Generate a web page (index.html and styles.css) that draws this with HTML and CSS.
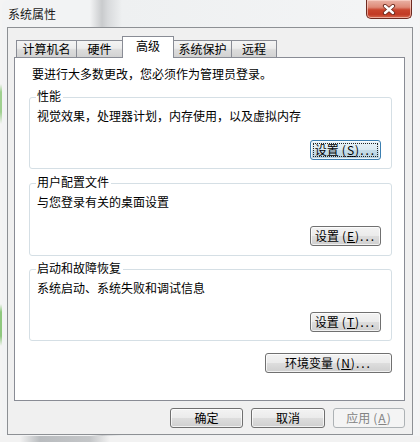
FILE: index.html
```html
<!DOCTYPE html>
<html lang="zh-CN">
<head>
<meta charset="utf-8">
<title>系统属性</title>
<link rel="stylesheet" href="styles.css">
</head>
<body>
<div class="screen">
  <div class="window">
    <div class="titlebar">
      <span class="title">系统属性</span>
      <div class="close">
        <svg width="14" height="11" viewBox="0 0 14 11">
          <path d="M3 2 L11 9 M11 2 L3 9" stroke="#6b2a1e" stroke-width="4.2" stroke-linecap="round" fill="none"/>
          <path d="M3 2 L11 9 M11 2 L3 9" stroke="#ffffff" stroke-width="2.4" stroke-linecap="round" fill="none"/>
        </svg>
      </div>
    </div>
    <div class="dialog">
      <div class="tabs">
        <div class="tab t1">计算机名</div>
        <div class="tab t2">硬件</div>
        <div class="tab active">高级</div>
        <div class="tab t4">系统保护</div>
        <div class="tab t5 last">远程</div>
      </div>
      <div class="panel">
        <div class="intro">要进行大多数更改，您必须作为管理员登录。</div>
        <div class="group g1">
          <span class="legend">性能</span>
          <div class="desc">视觉效果，处理器计划，内存使用，以及虚拟内存</div>
          <div class="row"><button class="btn set focus"><span class="focusring">设置<span class="mn">(<u>S</u>)</span><span class="dots">...</span></span></button></div>
        </div>
        <div class="group g2">
          <span class="legend">用户配置文件</span>
          <div class="desc">与您登录有关的桌面设置</div>
          <div class="row"><button class="btn set">设置<span class="mn">(<u>E</u>)</span><span class="dots">...</span></button></div>
        </div>
        <div class="group g3">
          <span class="legend">启动和故障恢复</span>
          <div class="desc">系统启动、系统失败和调试信息</div>
          <div class="row"><button class="btn set">设置<span class="mn">(<u>T</u>)</span><span class="dots">...</span></button></div>
        </div>
        <div class="envrow"><button class="btn env">环境变量<span class="mn">(<u>N</u>)</span><span class="dots">...</span></button></div>
      </div>
      <div class="footer">
        <button class="btn ok">确定</button>
        <button class="btn cancel">取消</button>
        <button class="btn apply" disabled>应用<span class="mn">(<u>A</u>)</span></button>
      </div>
    </div>
  </div>
</div>
</body>
</html>
```

FILE: styles.css
```css
* { box-sizing: border-box; }

body {
  margin: 0;
  font-family: "Noto Sans CJK SC", "Noto Sans", sans-serif;
  font-size: 12px;
  color: #000;
}

.screen {
  width: 420px;
  height: 442px;
  padding-left: 2px;
  background:
    linear-gradient(to bottom, transparent 84px, #9fd08f 92px, #9fd08f 112px, transparent 124px, transparent 304px, #8fc87e 312px, #8fc87e 336px, transparent 346px) 0 0 / 2px 100% no-repeat,
    linear-gradient(to right, #f2f2f2 0, #f2f2f2 20px, #b9bcbf 40px, #c4c6c8 90px, #f2f2f2 110px) 0 436px / 420px 6px no-repeat,
    #f4f4f4;
  overflow: hidden;
}

.window {
  width: 417px;
  height: 436px;
  padding: 0 6px 1px 5px;
  border-radius: 6px 6px 0 0;
  background:
    linear-gradient(to right, #f2f3f4 0, #f2f3f4 88px, #c9cbcd 100px, #d8dadc 106px, #eef0f1 120px, #f4f5f6 100%);
}

.titlebar {
  height: 27px;
  display: flex;
  justify-content: space-between;
  align-items: flex-start;
}

.title {
  padding-top: 6px;
  padding-left: 1px;
  line-height: 16px;
  font-size: 12px;
  color: #1a1a1a;
}

.close {
  width: 46px;
  height: 19px;
  margin-right: 1px;
  border: 1px solid #6e2a20;
  border-top: none;
  border-radius: 0 0 5px 5px;
  background: linear-gradient(to bottom, #eab3a6 0%, #de8a77 40%, #c9452d 55%, #c23a24 80%, #d66a4f 100%);
  display: flex;
  align-items: center;
  justify-content: center;
  box-shadow: inset 0 0 0 1px rgba(255, 220, 210, 0.6);
}

.dialog {
  height: 408px;
  border: 1px solid #8d9094;
  background: #f0f0f0;
  padding: 8px 7px 6px 6px;
  display: flex;
  flex-direction: column;
}

.tabs {
  height: 21px;
  display: flex;
  align-items: flex-end;
  padding-left: 2px;
}

.tab {
  height: 17px;
  line-height: 16px;
  border: 1px solid #898c95;
  border-right: none;
  border-bottom: none;
  background: linear-gradient(to bottom, #f4f4f4 0%, #ececec 45%, #dcdcdc 55%, #d2d2d2 100%);
  text-align: center;
}

.t1 { width: 60px; }
.t2 { width: 46px; }
.t4 { width: 57px; }
.t5 { width: 46px; }
.tab.last { border-right: 1px solid #898c95; }

.tab.active {
  position: relative;
  z-index: 1;
  width: 52px;
  height: 22px;
  margin-bottom: -1px;
  border-right: 1px solid #898c95;
  background: #ffffff;
  line-height: 18px;
}

.tab.active + .tab { border-left: none; }

.panel {
  height: 344px;
  background: #ffffff;
  border: 1px solid #898c95;
  padding: 8px 12px 0 14px;
  display: flex;
  flex-direction: column;
}

.intro {
  line-height: 16px;
  margin-left: 3px;
}

.group {
  position: relative;
  height: 72px;
  border: 1px solid #d5dfe5;
  border-radius: 3px;
  padding: 10px 10px 8px 7px;
}

.g1 { margin-top: 15px; }
.g2 { margin-top: 14px; height: 73px; }
.g3 { margin-top: 13px; }

.legend {
  position: absolute;
  left: 6px;
  top: -10px;
  line-height: 16px;
  padding: 0 2px 0 1px;
  background: #ffffff;
}

.desc {
  line-height: 16px;
}

.row {
  display: flex;
  justify-content: flex-end;
  margin-top: 16px;
}

.btn {
  font-family: "Noto Sans CJK SC", "Noto Sans", sans-serif;
  font-size: 12px;
  color: #000;
  height: 20px;
  padding: 0;
  border: 1px solid #707070;
  border-radius: 3px;
  background: linear-gradient(to bottom, #f3f3f3 0%, #ebebeb 48%, #dddddd 52%, #cfcfcf 100%);
  box-shadow: inset 0 0 0 1px rgba(255, 255, 255, 0.7);
  line-height: 16px;
  display: flex;
  align-items: center;
  justify-content: center;
}

.btn u { text-decoration: underline; }

.mn {
  margin-left: 3px;
  letter-spacing: 1px;
}

.dots {
  letter-spacing: 2px;
}

.set { width: 71px; }

.btn.focus {
  border-color: #3c7fb1;
  background: linear-gradient(to bottom, #e9f3f8 0%, #dbeaf2 48%, #c5dce8 52%, #b7d1df 100%);
  padding: 2px;
}

.focusring {
  display: flex;
  align-items: center;
  justify-content: center;
  width: 100%;
  height: 100%;
  outline: 1px dotted #222;
  outline-offset: -1px;
}

.envrow {
  display: flex;
  justify-content: flex-end;
  margin-top: 12px;
}

.env { width: 127px; }

.footer {
  display: flex;
  justify-content: flex-end;
  gap: 8px;
  margin-top: 7px;
}

.ok { width: 73px; }
.cancel { width: 74px; }
.apply {
  width: 72px;
  border-color: #adb2b5;
  background: #f4f4f4;
  color: #838383;
  box-shadow: none;
}
```
